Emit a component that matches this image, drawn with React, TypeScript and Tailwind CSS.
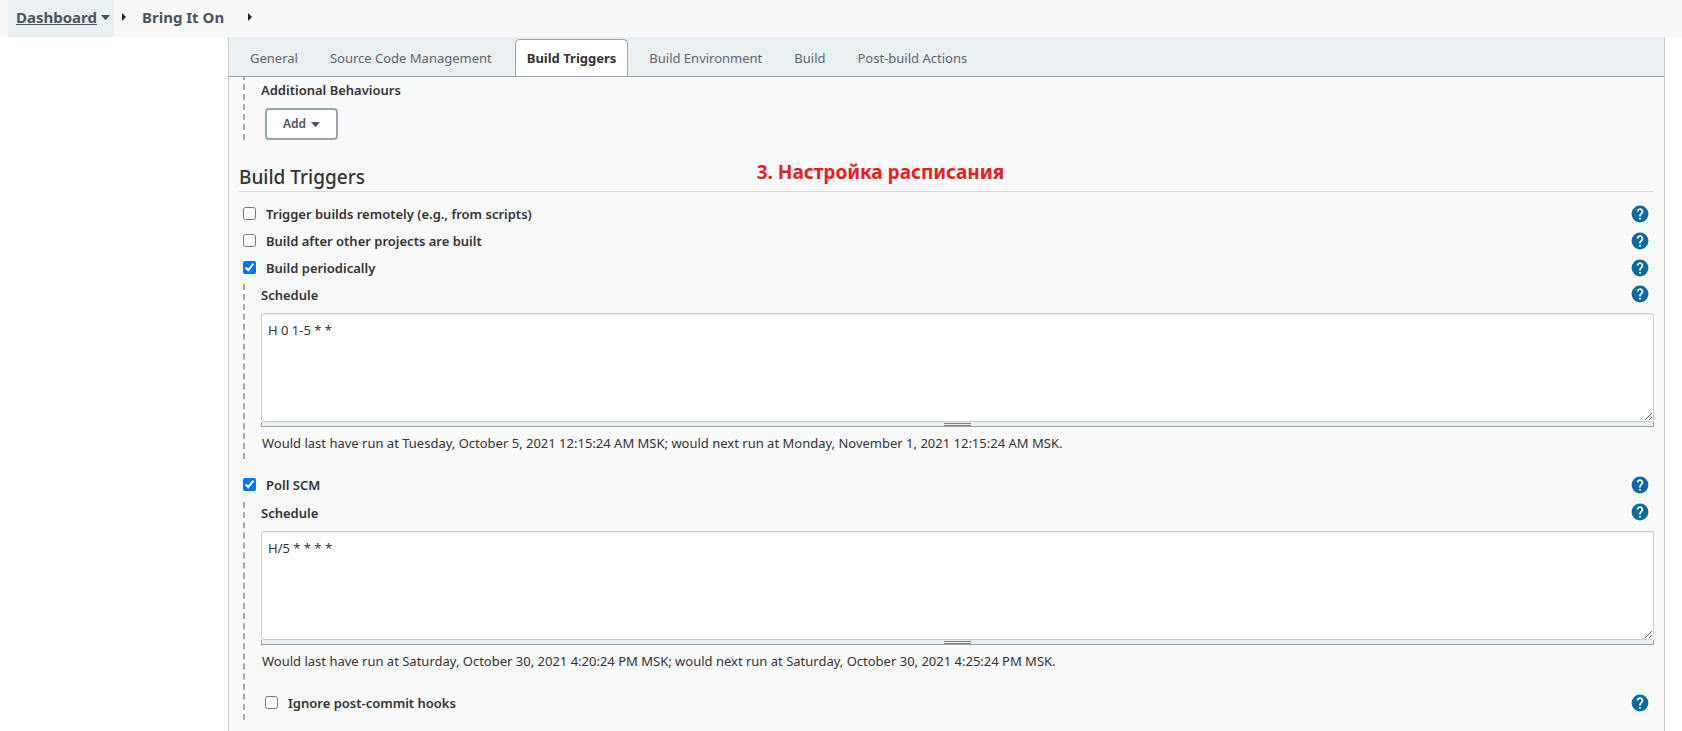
import { useState } from "react";
import type { ReactNode } from "react";

const tabs = [
  "General",
  "Source Code Management",
  "Build Triggers",
  "Build Environment",
  "Build",
  "Post-build Actions",
];

function CaretDown() {
  return (
    <svg width="9" height="5" viewBox="0 0 9 5" className="shrink-0 fill-[#4d545d]" aria-hidden="true">
      <path d="M0 0h9L5.2 4.4a1 1 0 0 1-1.4 0z" />
    </svg>
  );
}

function CaretRight() {
  return (
    <svg width="4" height="8" viewBox="0 0 4 8" className="shrink-0 fill-[#222]" aria-hidden="true">
      <path d="M0 0l4 4-4 4z" />
    </svg>
  );
}

function HelpButton({ topic }: { topic: string }) {
  return (
    <button type="button" aria-label={`Help for feature: ${topic}`} className="mr-[6px] size-4 shrink-0">
      <svg viewBox="2 2 20 20" className="size-4 overflow-visible" aria-hidden="true">
        <circle cx="12" cy="12" r="10.5" fill="#0b6aa2" />
        <path
          fill="#fff"
          d="M13.1 19h-2.2v-2.1h2.2V19zm2.07-7.75l-.9.92C13.45 12.9 13.1 13.5 13.1 15h-2.2v-.5c0-1.1.45-2.1 1.17-2.83l1.24-1.26c.37-.36.59-.86.59-1.41 0-1.1-.8-1.9-1.9-1.9s-1.9.8-1.9 1.9H7.9c0-2.21 1.79-4.1 4.1-4.1s4.1 1.79 4.1 4c0 .88-.36 1.78-.93 2.35z"
        />
      </svg>
    </button>
  );
}

function CheckRow({ id, label, checked = false }: { id: string; label: string; checked?: boolean }) {
  const [on, setOn] = useState(checked);
  return (
    <div className="flex h-[27px] items-center justify-between">
      <div className="flex items-center gap-[10px] pl-1">
        <input
          id={id}
          type="checkbox"
          checked={on}
          onChange={(e) => setOn(e.target.checked)}
          className="size-[13px] accent-[#0075ff]"
        />
        <label htmlFor={id} className="pt-[3px] font-semibold">
          {label}
        </label>
      </div>
      <HelpButton topic={label} />
    </div>
  );
}

function Nested({ children }: { children: ReactNode }) {
  return <div className="ml-1 border-l-2 border-dashed border-[#a9a9a9] pl-4">{children}</div>;
}

function Schedule({ id, value, note }: { id: string; value: string; note: string }) {
  return (
    <>
      <div className="flex h-5 items-center justify-between">
        <label htmlFor={id} className="pt-[3px] font-semibold">
          Schedule
        </label>
        <HelpButton topic="Schedule" />
      </div>
      <textarea
        id={id}
        defaultValue={value}
        spellCheck={false}
        className="mt-[9px] block h-[109px] w-full resize rounded-[3px] border border-[#ccc] bg-white px-[6px] py-[6px] leading-5 shadow-[inset_0_1px_1px_rgba(0,0,0,0.075)] outline-none"
      />
      <div className="flex h-[5px] items-center justify-center border-x border-b border-[#98a6ad] bg-[#eaeff2]">
        <div className="h-[3px] w-[27px] border-y border-[#808080]" />
      </div>
      <p className="mt-[6px] pl-px leading-5">{note}</p>
    </>
  );
}

export default function App() {
  return (
    <div className="flex h-screen flex-col overflow-hidden bg-white font-['Noto_Sans','Open_Sans',sans-serif] text-[13px] text-[#333]">
      <nav aria-label="Breadcrumb" className="flex h-[37px] shrink-0 items-stretch bg-[#f8f8f8] pl-2 text-[15px] font-bold text-[#4d545d]">
        <div className="flex items-center gap-1 bg-[#eaeff2] pr-1 pb-[3px] pl-2">
          <a href="#dashboard" className="underline">
            Dashboard
          </a>
          <CaretDown />
        </div>
        <div className="flex items-center pb-[3px] pl-2">
          <CaretRight />
          <a href="#bring-it-on" className="mr-6 ml-4">
            Bring It On
          </a>
          <CaretRight />
        </div>
      </nav>

      <main className="mr-[17px] ml-[228px] flex min-h-0 grow flex-col border-x border-[#ccc] bg-[#f9f9f9]">
        <div role="tablist" className="flex h-10 shrink-0 items-end border-b border-[#98a6ad] bg-[#eaeff2] pl-[10px]">
          {tabs.map((tab) =>
            tab === "Build Triggers" ? (
              <button
                key={tab}
                type="button"
                role="tab"
                aria-selected="true"
                className="mr-[10px] ml-0.5 h-[37px] rounded-t-[5px] border-x border-t border-[#98a6ad] bg-white px-[11px] pt-0.5 font-bold"
              >
                {tab}
              </button>
            ) : (
              <button
                key={tab}
                type="button"
                role="tab"
                aria-selected="false"
                className="mr-[10px] h-[37px] px-[11px] pt-0.5 text-[#60666f]"
              >
                {tab}
              </button>
            ),
          )}
        </div>

        <div className="min-h-0 grow overflow-hidden px-[10px]">
          <div className="-mt-[3px]">
            <Nested>
              <div className="h-[66px] pt-[6px]">
                <p className="leading-5 font-semibold">Additional Behaviours</p>
                <button
                  type="button"
                  className="mt-2 ml-1 flex h-8 items-center gap-[5px] rounded-[4px] border-2 border-[#98a6ad] bg-white px-4 text-xs font-semibold text-[#4d545d]"
                >
                  Add
                  <CaretDown />
                </button>
              </div>
            </Nested>
          </div>

          <div className="mt-[22px] grid grid-cols-[15fr_26fr] border-b border-[#ddd]">
            <h2 className="pt-0.5 pb-px text-[19px] leading-[26px] font-medium">Build Triggers</h2>
            <p className="text-[19px] leading-5 font-bold text-[#ed1c24]">3. Настройка расписания</p>
          </div>

          <div className="pt-2">
            <CheckRow id="remote" label="Trigger builds remotely (e.g., from scripts)" />
            <CheckRow id="after" label="Build after other projects are built" />
            <CheckRow id="periodic" label="Build periodically" checked />
            <div className="mt-[3px]">
              <Nested>
                <div className="h-[175px]">
                  <Schedule
                    id="periodic-schedule"
                    value="H 0 1-5 * *"
                    note="Would last have run at Tuesday, October 5, 2021 12:15:24 AM MSK; would next run at Monday, November 1, 2021 12:15:24 AM MSK."
                  />
                </div>
              </Nested>
            </div>
            <div className="mt-3">
              <CheckRow id="poll" label="Poll SCM" checked />
            </div>
            <div className="mt-1">
              <Nested>
                <div className="h-[218px]">
                  <Schedule
                    id="poll-schedule"
                    value="H/5 * * * *"
                    note="Would last have run at Saturday, October 30, 2021 4:20:24 PM MSK; would next run at Saturday, October 30, 2021 4:25:24 PM MSK."
                  />
                  <div className="mt-[18px]">
                    <CheckRow id="hooks" label="Ignore post-commit hooks" />
                  </div>
                </div>
              </Nested>
            </div>
          </div>
        </div>
      </main>
    </div>
  );
}
